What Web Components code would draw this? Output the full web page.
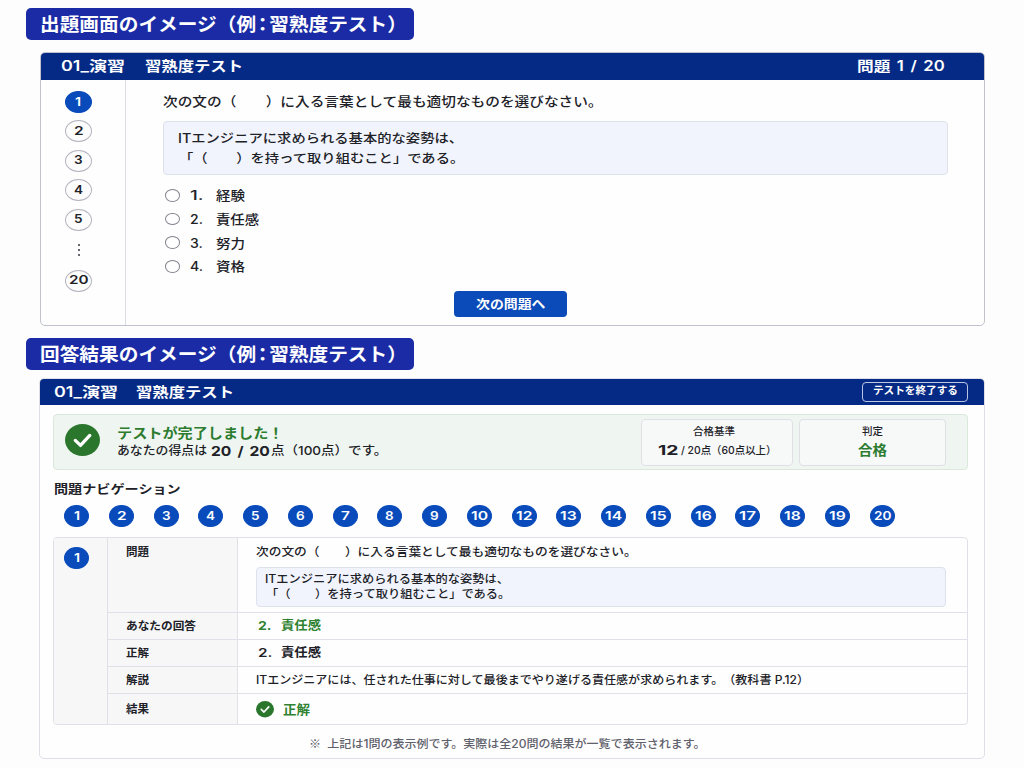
<!DOCTYPE html>
<html lang="ja">
<head>
<meta charset="utf-8">
<title>習熟度テスト</title>
<style>
  body {
    margin: 0;
    width: 1024px;
    height: 768px;
    overflow: hidden;
    background: #fdfdfe;
    color: #202127;
    font-family: "Inter", "Noto Sans CJK JP", sans-serif;
    font-weight: 500;
  }
</style>
</head>
<body>
<quiz-page></quiz-page>

<script>
// one line of text, widened to a given width
class FitText extends HTMLElement {
  constructor() {
    super();
    this.attachShadow({ mode: "open" }).innerHTML = /* html */ `
      <style>
        :host {
          display: block;
          flex: none;
          height: 1.4em;
          line-height: 1.4;
          white-space: nowrap;
          text-spacing-trim: space-all;
        }
        span { display: block; width: max-content; transform-origin: 0 50%; }
      </style>
      <span><slot></slot></span>
    `;
  }

  connectedCallback() {
    const width = Number(this.getAttribute("width"));
    const span = this.shadowRoot.querySelector("span");
    this.style.width = width + "px";
    span.style.transform = `scaleX(${width / span.offsetWidth})`;
  }
}

class SectionTitle extends HTMLElement {
  constructor() {
    super();
    this.attachShadow({ mode: "open" }).innerHTML = /* html */ `
      <style>
        :host {
          box-sizing: border-box;
          display: flex;
          align-items: center;
          width: 388px;
          height: 32px;
          padding: 1px 0 0 14px;
          border-radius: 5px;
          background: #1a2ba5;
          color: #fff;
          font-size: 18.5px;
          font-weight: 700;
        }
        /* half-width colon with a little air round it */
        i { font-style: normal; font-feature-settings: "halt"; padding: 0 1.5px; }
      </style>
      <fit-text width="367">${this.getAttribute("label")}のイメージ（例<i>：</i>習熟度テスト）</fit-text>
    `;
  }
}

class NumPill extends HTMLElement {
  constructor() {
    super();
    const n = this.getAttribute("n");
    this.attachShadow({ mode: "open" }).innerHTML = /* html */ `
      <style>
        :host {
          box-sizing: border-box;
          flex: none;
          display: flex;
          align-items: center;
          justify-content: center;
          width: 27px;
          height: 22px;
          border: 1px solid #b3b4be;
          border-radius: 50%;
          background: #fcfcfd;
          font-size: 12px;
          font-weight: 600;
        }
        :host([on]) { background: #094bbb; border-color: #094bbb; color: #fff; }
        :host([small]) { width: 25px; }
      </style>
      <fit-text width="${n === "1" ? 6 : n.length === 1 ? 9 : this.hasAttribute("small") ? 17 : 19}">${n}</fit-text>
    `;
  }
}

class CheckMark extends HTMLElement {
  constructor() {
    super();
    this.attachShadow({ mode: "open" }).innerHTML = /* html */ `
      <style>
        :host { display: block; flex: none; width: 35px; height: 32px; }
        svg { display: block; width: 100%; height: 100%; }
      </style>
      <svg viewBox="0 0 35 32" preserveAspectRatio="none">
        <ellipse cx="17.5" cy="16" rx="17.5" ry="16" fill="#2b762d"/>
        <path d="M10.3 16.4l5.2 5L24.8 11.4" fill="none" stroke="#fff" stroke-width="3.3" stroke-linecap="round" stroke-linejoin="round"/>
      </svg>
    `;
  }
}

class PanelCard extends HTMLElement {
  constructor() {
    super();
    this.attachShadow({ mode: "open" }).innerHTML = /* html */ `
      <style>
        :host {
          box-sizing: border-box;
          display: flex;
          flex-direction: column;
          border: 1px solid #c0c2cd;
          border-radius: 5px;
          background: #fefefe;
          overflow: hidden;
        }
        header {
          flex: none;
          box-sizing: border-box;
          display: flex;
          align-items: center;
          height: var(--head, 28px);
          margin: -1px -1px 0;
          padding: 0 var(--head-right, 40px) 0 var(--head-left, 21px);
          background: #052a85;
          color: #fff;
          font-size: 14px;
          font-weight: 600;
        }
        .name { margin-left: var(--name-gap, 20px); }
        ::slotted([slot="action"]) { margin-left: auto; }
      </style>
      <header>
        <fit-text width="64">01_演習</fit-text>
        <fit-text class="name" width="98">習熟度テスト</fit-text>
        <slot name="action"></slot>
      </header>
      <slot></slot>
    `;
  }
}

class QuoteBox extends HTMLElement {
  constructor() {
    super();
    const w = this.getAttribute("width");
    this.attachShadow({ mode: "open" }).innerHTML = /* html */ `
      <style>
        :host {
          box-sizing: border-box;
          display: flex;
          flex-direction: column;
          justify-content: center;
          gap: var(--gap, 0);
          border: 1px solid #dde1ec;
          border-radius: 4px;
          background: #f1f4fc;
        }
        .second { margin-left: 1px; }
      </style>
      <fit-text width="${w}">ITエンジニアに求められる基本的な姿勢は、</fit-text>
      <fit-text class="second" width="${w}">「（　　）を持って取り組むこと」である。</fit-text>
    `;
  }
}

class QuizQuestion extends HTMLElement {
  constructor() {
    super();
    const options = [["経験", 29], ["責任感", 43], ["努力", 29], ["資格", 29]];
    this.attachShadow({ mode: "open" }).innerHTML = /* html */ `
      <style>
        :host { display: flex; flex: 1; min-height: 0; }
        nav {
          box-sizing: border-box;
          width: 85px;
          border-right: 1px solid #dcdde6;
          display: flex;
          flex-direction: column;
          align-items: center;
          gap: 7.4px;
          padding: 11px 10px 0 0;
        }
        .dots {
          display: flex;
          flex-direction: column;
          gap: 3px;
          padding: 6px 0 6.5px 1px;
        }
        .dots i { width: 2px; height: 2px; background: #34353c; border-radius: 1px; }
        main { flex: 1; padding: 12px 36px 0 37px; font-size: 13px; }
        quote-box {
          --gap: 2px;
          height: 54px;
          margin-top: 11px;
          padding: 1px 0 0 14px;
          font-size: 12.5px;
        }
        ul { list-style: none; margin: 8.5px 0 0; padding: 0 0 0 2px; }
        li { display: flex; align-items: center; height: 23.6px; }
        .radio {
          box-sizing: border-box;
          width: 15px;
          height: 12.5px;
          border: 1px solid #83858f;
          border-radius: 50%;
          background: #fff;
        }
        .num { margin: 0 13px 0 10px; }
        button {
          display: flex;
          align-items: center;
          justify-content: center;
          width: 113px;
          height: 26px;
          margin: 13px 0 0 291px;
          padding: 1px 0 0;
          border: 0;
          border-radius: 4px;
          background: #0b4bb9;
          color: #fff;
          font: 700 12.5px "Inter", "Noto Sans CJK JP", sans-serif;
        }
      </style>
      <nav>
        <num-pill n="1" on></num-pill>
        ${[2, 3, 4, 5].map(n => `<num-pill n="${n}"></num-pill>`).join("")}
        <div class="dots"><i></i><i></i><i></i></div>
        <num-pill n="20"></num-pill>
      </nav>
      <main>
        <fit-text width="440">次の文の（　　）に入る言葉として最も適切なものを選びなさい。</fit-text>
        <quote-box width="285"></quote-box>
        <ul>
          ${options.map(([text, w], i) => `
            <li>
              <span class="radio"></span>
              <fit-text class="num" width="13">${i + 1}.</fit-text>
              <fit-text width="${w}">${text}</fit-text>
            </li>`).join("")}
        </ul>
        <button><fit-text width="70">次の問題へ</fit-text></button>
      </main>
    `;
  }
}

class ResultBanner extends HTMLElement {
  constructor() {
    super();
    this.attachShadow({ mode: "open" }).innerHTML = /* html */ `
      <style>
        :host {
          box-sizing: border-box;
          display: flex;
          align-items: center;
          height: 56px;
          padding: 0 21px 0 11px;
          border: 1px solid #d9e8da;
          border-radius: 4px;
          background: #eff5f0;
        }
        check-mark { margin-top: -4px; }
        .message { margin: 0 auto 0 17px; }
        .title { color: #2c7c2f; font-size: 13.5px; font-weight: 700; }
        .score { display: flex; align-items: center; font-size: 12px; }
        .score b { font-size: 13.5px; font-weight: 700; margin: -1px 1px 0 4px; word-spacing: 2px; }
        .box {
          box-sizing: border-box;
          display: flex;
          flex-direction: column;
          align-items: center;
          width: 152px;
          height: 47px;
          margin-left: 6px;
          padding-top: 4px;
          border: 1px solid #dfe0e6;
          border-radius: 4px;
          background: #f7f8f8;
          font-size: 10px;
          gap: 3px;
        }
        .box.verdict { width: 147px; gap: 3px; }
        .caption { margin-right: 6px; }
        .line { display: flex; align-items: center; gap: 3px; font-size: 10.5px; }
        .line b { font-size: 13.5px; font-weight: 700; }
        .line > fit-text { margin-top: 2px; }
        .pass { color: #2c7c2f; font-size: 13.5px; font-weight: 700; }
      </style>
      <check-mark></check-mark>
      <div class="message">
        <fit-text class="title" width="167">テストが完了しました！</fit-text>
        <div class="score">
          <fit-text width="90">あなたの得点は</fit-text>
          <b><fit-text width="59">20 / 20</fit-text></b>
          <fit-text width="116">点（100点）です。</fit-text>
        </div>
      </div>
      <div class="box">
        <fit-text class="caption" width="42">合格基準</fit-text>
        <div class="line">
          <b><fit-text width="20">12</fit-text></b>
          <fit-text width="95">/ 20点（60点以上）</fit-text>
        </div>
      </div>
      <div class="box verdict">
        <fit-text width="21">判定</fit-text>
        <fit-text class="pass" width="29">合格</fit-text>
      </div>
    `;
  }
}

class AnswerTable extends HTMLElement {
  constructor() {
    super();
    this.attachShadow({ mode: "open" }).innerHTML = /* html */ `
      <style>
        :host {
          box-sizing: border-box;
          display: grid;
          grid-template-columns: 53px 131px 1fr;
          grid-template-rows: 75px 27px 27px 27px 1fr;
          height: 188px;
          border: 1px solid #dfe0e8;
          border-radius: 4px;
          overflow: hidden;
          font-size: 11.5px;
        }
        .no {
          grid-row: 1 / 6;
          background: #f7f7f8;
          padding: 9px 0 0 10px;
        }
        .label {
          box-sizing: border-box;
          display: flex;
          align-items: center;
          padding-left: 18px;
          border: solid #dfe0e8;
          border-width: 0 1px 1px;
          background: #f7f7f8;
          font-weight: 700;
          font-size: 11px;
        }
        .cell {
          box-sizing: border-box;
          display: flex;
          align-items: center;
          padding-left: 18px;
          border-bottom: 1px solid #dfe0e8;
        }
        .cell.top { display: block; padding-top: 6px; padding-right: 21px; }
        .label.top { align-items: flex-start; padding-top: 7px; }
        .label.last, .cell.last { border-bottom: 0; }
        quote-box { height: 40px; margin-top: 7px; padding-left: 8px; font-size: 11.3px; }
        .answer { font-size: 12px; font-weight: 600; gap: 9px; padding-left: 20px; }
        .ok { color: #2f8232; font-weight: 700; }
        .result { font-size: 13px; gap: 9px; }
        check-mark { width: 18px; height: 16.5px; }
      </style>
      <div class="no"><num-pill n="1" on small></num-pill></div>
      <div class="label top"><fit-text width="23">問題</fit-text></div>
      <div class="cell top">
        <fit-text width="381">次の文の（　　）に入る言葉として最も適切なものを選びなさい。</fit-text>
        <quote-box width="244"></quote-box>
      </div>
      <div class="label"><fit-text width="70">あなたの回答</fit-text></div>
      <div class="cell answer ok"><fit-text width="14">2.</fit-text><fit-text width="40">責任感</fit-text></div>
      <div class="label"><fit-text width="23">正解</fit-text></div>
      <div class="cell answer"><fit-text width="14">2.</fit-text><fit-text width="40">責任感</fit-text></div>
      <div class="label"><fit-text width="23">解説</fit-text></div>
      <div class="cell"><fit-text width="553">ITエンジニアには、任された仕事に対して最後までやり遂げる責任感が求められます。（教科書 P.12）</fit-text></div>
      <div class="label last"><fit-text width="23">結果</fit-text></div>
      <div class="cell last ok result"><check-mark></check-mark><fit-text width="27">正解</fit-text></div>
    `;
  }
}

class QuizResult extends HTMLElement {
  constructor() {
    super();
    // the strip goes straight from 10 to 12
    const numbers = [1, 2, 3, 4, 5, 6, 7, 8, 9, 10, 12, 13, 14, 15, 16, 17, 18, 19, 20];
    this.attachShadow({ mode: "open" }).innerHTML = /* html */ `
      <style>
        :host { display: block; padding: 9px 16px 0 13px; }
        .caption { margin: 12px 0 0 1px; font-size: 12px; font-weight: 600; }
        nav {
          display: flex;
          justify-content: space-between;
          margin: 6.5px 73px 10px 11px;
        }
        .note {
          margin: 10px 0 0 256px;
          font-size: 11.5px;
          color: #5f616b;
          word-spacing: 3px;
        }
        .mark { font-family: "Noto Sans CJK JP", sans-serif; }
      </style>
      <result-banner></result-banner>
      <fit-text class="caption" width="127">問題ナビゲーション</fit-text>
      <nav>${numbers.map(n => `<num-pill n="${n}" on small></num-pill>`).join("")}</nav>
      <answer-table></answer-table>
      <fit-text class="note" width="397"><span class="mark">※</span> 上記は1問の表示例です。実際は全20問の結果が一覧で表示されます。</fit-text>
    `;
  }
}

class QuizPage extends HTMLElement {
  constructor() {
    super();
    this.attachShadow({ mode: "open" }).innerHTML = /* html */ `
      <style>
        :host { display: flex; flex-direction: column; padding: 8px 39px 0 26px; }
        .ask { height: 274px; margin: 12px 0 12px 14px; }
        .page { word-spacing: 2px; }
        .result {
          height: 381px;
          margin: 8px 0 0 13px;
          border-color: #dedfe8;
          --head: 27px;
          --head-left: 15px;
          --head-right: 17px;
          --name-gap: 18px;
        }
        .end {
          box-sizing: border-box;
          display: flex;
          align-items: center;
          justify-content: center;
          width: 106px;
          height: 20px;
          border: 1px solid #bcc6e2;
          border-radius: 4px;
          font-size: 10.5px;
          font-weight: 700;
        }
      </style>
      <section-title label="出題画面"></section-title>
      <panel-card class="ask">
        <fit-text slot="action" class="page" width="88">問題 1 / 20</fit-text>
        <quiz-question></quiz-question>
      </panel-card>
      <section-title label="回答結果"></section-title>
      <panel-card class="result">
        <div slot="action" class="end"><fit-text width="85">テストを終了する</fit-text></div>
        <quiz-result></quiz-result>
      </panel-card>
    `;
  }
}

customElements.define("section-title", SectionTitle);
customElements.define("num-pill", NumPill);
customElements.define("check-mark", CheckMark);
customElements.define("panel-card", PanelCard);
customElements.define("quote-box", QuoteBox);
customElements.define("quiz-question", QuizQuestion);
customElements.define("result-banner", ResultBanner);
customElements.define("answer-table", AnswerTable);
customElements.define("quiz-result", QuizResult);
customElements.define("fit-text", FitText);
customElements.define("quiz-page", QuizPage);
</script>
</body>
</html>
